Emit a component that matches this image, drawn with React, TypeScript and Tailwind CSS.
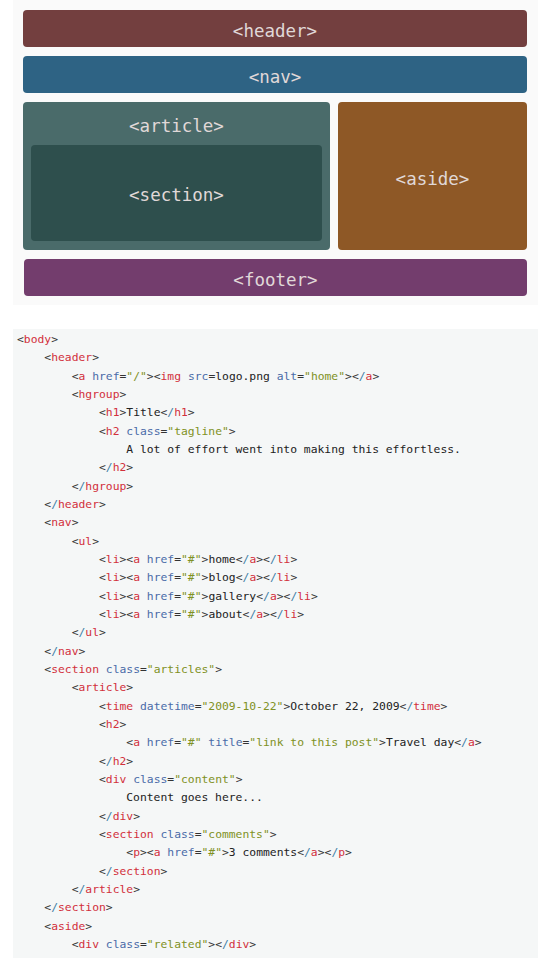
import React from 'react';

const codeLines: string[] = [
  '<body>',
  '    <header>',
  '        <a href="/"><img src=logo.png alt="home"></a>',
  '        <hgroup>',
  '            <h1>Title</h1>',
  '            <h2 class="tagline">',
  '                A lot of effort went into making this effortless.',
  '            </h2>',
  '        </hgroup>',
  '    </header>',
  '    <nav>',
  '        <ul>',
  '            <li><a href="#">home</a></li>',
  '            <li><a href="#">blog</a></li>',
  '            <li><a href="#">gallery</a></li>',
  '            <li><a href="#">about</a></li>',
  '        </ul>',
  '    </nav>',
  '    <section class="articles">',
  '        <article>',
  '            <time datetime="2009-10-22">October 22, 2009</time>',
  '            <h2>',
  '                <a href="#" title="link to this post">Travel day</a>',
  '            </h2>',
  '            <div class="content">',
  '                Content goes here...',
  '            </div>',
  '            <section class="comments">',
  '                <p><a href="#">3 comments</a></p>',
  '            </section>',
  '        </article>',
  '    </section>',
  '    <aside>',
  '        <div class="related"></div>',
];

type Tok = { t: string; k: 'punct' | 'slash' | 'tag' | 'attr' | 'val' | 'text' };

// small tokenizer for the html snippet
function tokenize(line: string): Tok[] {
  const out: Tok[] = [];
  let i = 0;
  let inTag = false;
  let expectName = false;
  while (i < line.length) {
    const c = line[i];
    if (!inTag) {
      if (c === '<') {
        out.push({ t: '<', k: 'punct' });
        i++;
        if (line[i] === '/') {
          out.push({ t: '/', k: 'slash' });
          i++;
        }
        inTag = true;
        expectName = true;
      } else {
        let j = i;
        while (j < line.length && line[j] !== '<') j++;
        out.push({ t: line.slice(i, j), k: 'text' });
        i = j;
      }
    } else {
      if (c === '>') {
        out.push({ t: '>', k: 'punct' });
        i++;
        inTag = false;
      } else if (c === ' ') {
        out.push({ t: ' ', k: 'text' });
        i++;
      } else if (c === '=') {
        out.push({ t: '=', k: 'punct' });
        i++;
        if (line[i] === '"') {
          const end = line.indexOf('"', i + 1);
          out.push({ t: line.slice(i, end + 1), k: 'val' });
          i = end + 1;
        } else {
          let j = i;
          while (j < line.length && line[j] !== ' ' && line[j] !== '>') j++;
          out.push({ t: line.slice(i, j), k: 'text' });
          i = j;
        }
      } else {
        let j = i;
        while (j < line.length && !/[\s=>]/.test(line[j])) j++;
        out.push({ t: line.slice(i, j), k: expectName ? 'tag' : 'attr' });
        expectName = false;
        i = j;
      }
    }
  }
  return out;
}

const tokClass: Record<Tok['k'], string> = {
  punct: 'text-[#333333]',
  slash: 'text-[#3f7fa6]',
  tag: 'text-[#d2303c]',
  attr: 'text-[#4a6ba8]',
  val: 'text-[#7f9124]',
  text: 'text-[#222222]',
};

function Box({ label, className }: { label: string; className: string }) {
  return (
    <div className={`flex items-center justify-center rounded-[4px] ${className}`}>
      <span className="text-[17.5px] text-[#e0d8d8] pt-[6px]">{label}</span>
    </div>
  );
}

export default function App() {
  return (
    <div className="h-[958px] overflow-hidden bg-white font-['DejaVu_Sans_Mono','Liberation_Mono',monospace]">
      {/* layout diagram */}
      <div className="mx-[13px] w-[525px] bg-[#fafafa] pl-[10px] pr-[11px] pt-[10px] pb-[9px] flex flex-col gap-[9px]">
        <Box label="<header>" className="h-[37px] bg-[#733f3f]" />
        <Box label="<nav>" className="h-[37px] bg-[#2e6384]" />
        <div className="flex gap-[8px] h-[148px]">
          <div className="w-[307px] rounded-[4px] bg-[#4a6b6a] flex flex-col px-[8px] pb-[9px]">
            <div className="h-[43px] flex items-center justify-center">
              <span className="text-[17.5px] text-[#e0d8d8] pt-[6px]">&lt;article&gt;</span>
            </div>
            <div className="flex-1 rounded-[4px] bg-[#2e4f4d] flex items-center justify-center">
              <span className="text-[17.5px] text-[#e0d8d8] pt-[4px]">&lt;section&gt;</span>
            </div>
          </div>
          <div className="flex-1 rounded-[4px] bg-[#8e5826] flex items-center justify-center">
            <span className="text-[17.5px] text-[#e0d8d8] pt-[6px]">&lt;aside&gt;</span>
          </div>
        </div>
        <Box label="<footer>" className="h-[37px] bg-[#733d6d] ml-[1px]" />
      </div>

      {/* code sample */}
      <pre className="mt-[24px] mx-[13px] w-[525px] bg-[#f5f7f7] pl-[4px] pt-[1px] pb-[12px] text-[11.35px] leading-[18.33px] font-['DejaVu_Sans_Mono','Liberation_Mono',monospace] overflow-hidden">
        {codeLines.map((line, n) => (
          <div key={n} className="whitespace-pre">
            {tokenize(line).map((tok, m) => (
              <span key={m} className={tokClass[tok.k]}>
                {tok.t}
              </span>
            ))}
          </div>
        ))}
      </pre>
    </div>
  );
}
